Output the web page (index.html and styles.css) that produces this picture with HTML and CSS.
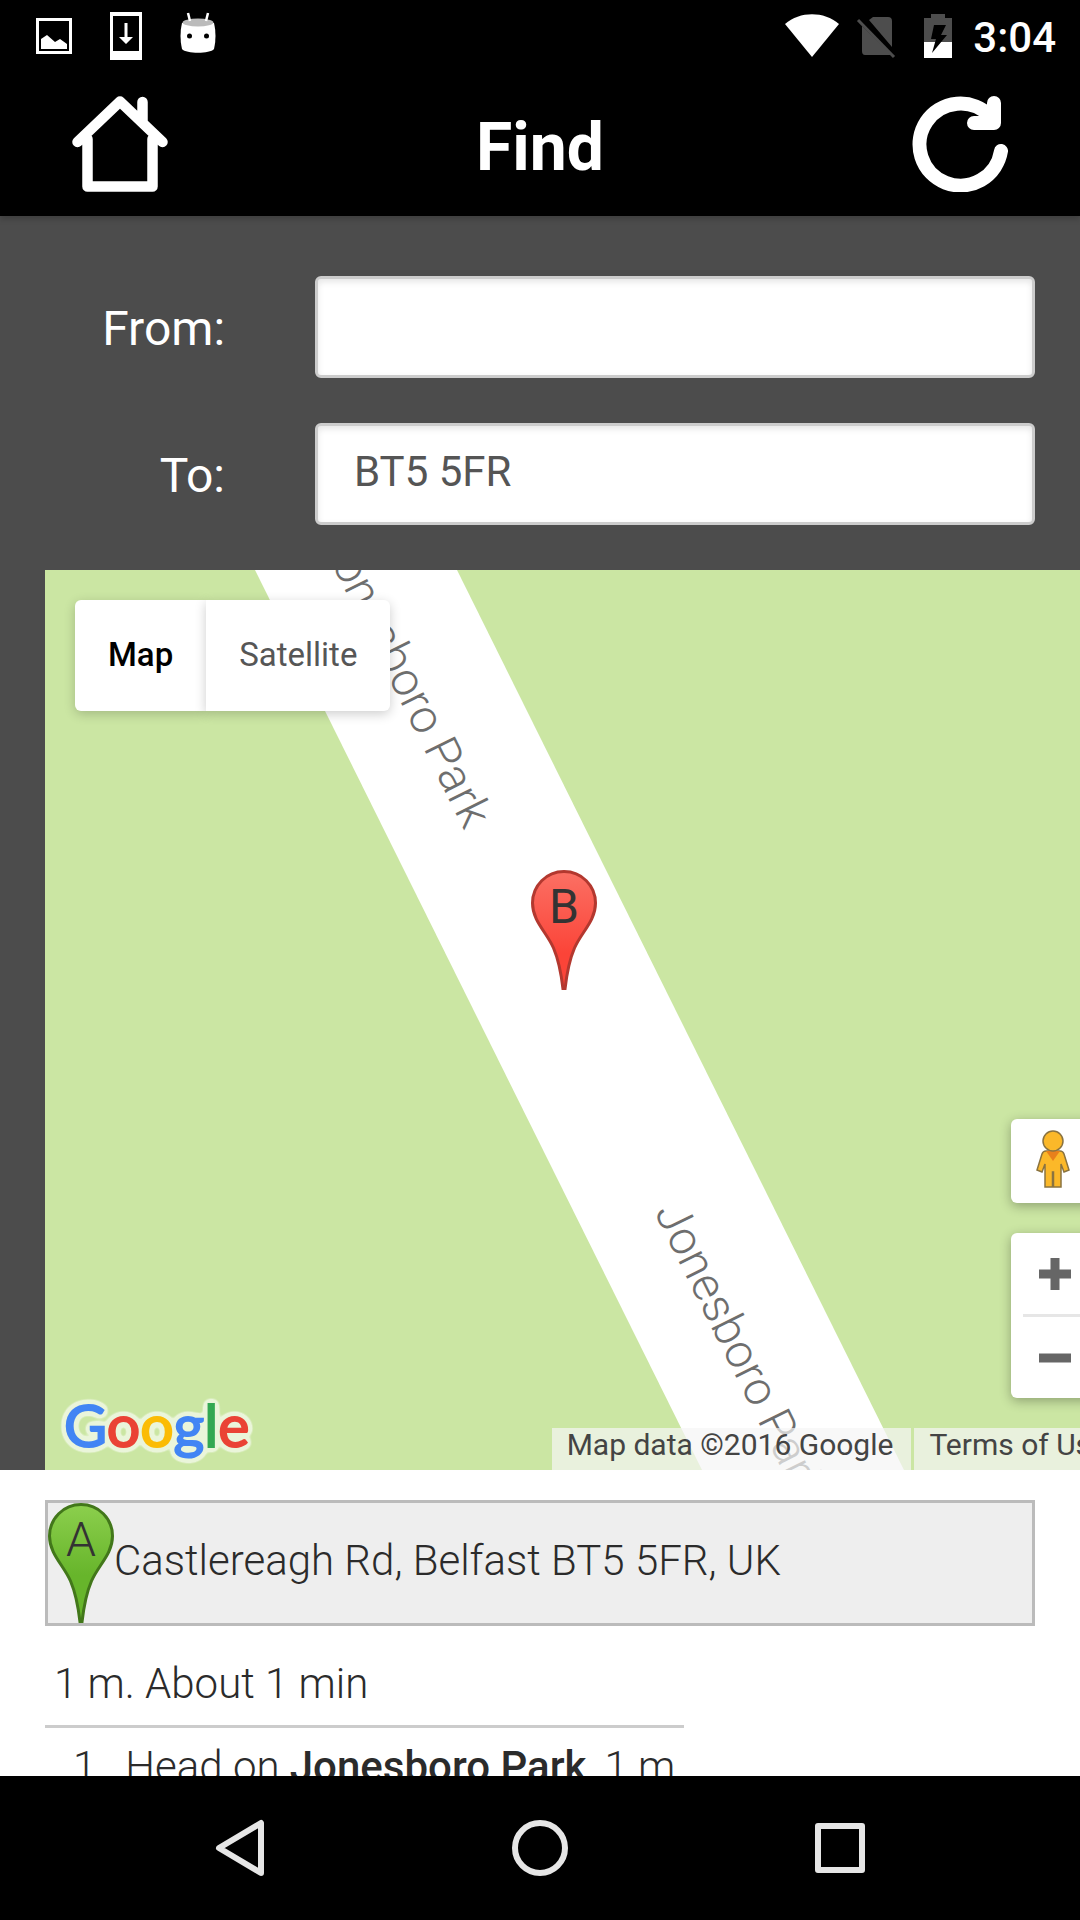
FILE: index.html
```html
<!DOCTYPE html>
<html lang="en">
<head>
  <meta charset="UTF-8">
  <title>Find</title>
  <meta name="viewport" content="width=device-width, initial-scale=1.0">
  <link rel="stylesheet" href="styles.css">
</head>
<body>

  <div class="status-bar">
    <div class="notifications">
      <svg width="72" height="72" viewBox="0 0 72 72">
        <rect x="19.5" y="19.5" width="33" height="33" fill="none" stroke="#fff" stroke-width="3"/>
        <path d="M23 39l6-4 8 7 5-3 7 5v5H23z" fill="#fff"/>
      </svg>
      <svg width="72" height="72" viewBox="0 0 72 72">
        <path d="M20 12h32v48H20zM23 16v35h26V16z" fill="#fff" fill-rule="evenodd"/>
        <path d="M34.500 23h3v14h5.500L36 44l-7-7h5.500z" fill="#fff"/>
      </svg>
      <svg width="72" height="72" viewBox="0 0 72 72">
        <path d="M20 23c-2 8-2 18 0 26 4 5 28 5 32 0 2-8 2-18 0-26z" fill="#fff"/>
        <ellipse cx="36" cy="22.500" rx="15.500" ry="4" fill="#bbb"/>
        <path d="M26 13l2 8M46 13l-2 8" stroke="#fff" stroke-width="2.500"/>
        <circle cx="27.500" cy="36" r="2.500"/>
        <circle cx="44.500" cy="36" r="2.500"/>
      </svg>
    </div>
    <div class="system-icons">
      <svg width="54" height="72" viewBox="0 0 54 72">
        <path d="M0 24C15 11 39 11 54 24L27 57z" fill="#fff"/>
      </svg>
      <svg width="40" height="72" viewBox="0 0 40 72">
        <path d="M13 20l4-3h15q4 0 4 4v26zM6 26l29 29H9q-3 0-3-4z" fill="#4d4d4d"/>
        <path d="M2 20l36 37" stroke="#4d4d4d" stroke-width="3"/>
      </svg>
      <svg width="30" height="72" viewBox="0 0 30 72">
        <path d="M1 18h7v-4h14v4h7v24H1z" fill="#4d4d4d"/>
        <path d="M1 42h28v16H1z" fill="#fff"/>
        <path d="M11 25h12l-5 10h6L9 53l4-14H8z"/>
      </svg>
      <span class="clock">3:04</span>
    </div>
  </div>

  <header class="header">
    <button class="icon-btn" aria-label="Home">
      <svg width="96" height="96" viewBox="0 0 96 96" fill="none" stroke="#fff" stroke-width="10.500" stroke-linecap="round" stroke-linejoin="round">
        <path d="M5.500 46L48 5.500 90.500 46M70.500 6v20M15.500 43v47.500h65V43"/>
      </svg>
    </button>
    <h1>Find</h1>
    <button class="icon-btn" aria-label="Refresh">
      <svg width="96" height="96" viewBox="0 0 96 96" fill="none" stroke="#fff" stroke-width="14" stroke-linecap="round" stroke-linejoin="round">
        <path d="M89 55A41 41 0 1 1 78 20"/>
        <path d="M82 7v20H62" />
        <path d="M72 16l10 10" stroke-width="12"/>
      </svg>
    </button>
  </header>

  <main>
    <form class="route-form">
      <label for="from">From:</label>
      <input type="text" id="from">
      <label for="to">To:</label>
      <input type="text" id="to" value="BT5 5FR">
    </form>

    <div class="map">
      <div class="map-canvas">
        <svg class="roads" width="100%" height="900">
          <path d="M210 0H412L859 900H657z" fill="#fff"/>
          <text transform="translate(275 -30) rotate(63.600)">Jonesboro Park</text>
          <text transform="translate(609 642) rotate(63.600)">Jonesboro Park</text>
        </svg>

        <svg class="pin pin-b" width="66" height="120" viewBox="0 0 66 120">
          <defs>
            <linearGradient id="red" x1="0" y1="0" x2="0" y2="1">
              <stop offset="0" stop-color="#fb7064"/>
              <stop offset="0.700" stop-color="#fb4438"/>
            </linearGradient>
          </defs>
          <path d="M33 1.500C15.500 1.500 1.500 15.500 1.500 33c0 18 14 29 21 45 6 14 8 28 9.500 41h2c1.500-13 3.500-27 9.500-41 7-16 21-27 21-45C64.500 15.500 50.500 1.500 33 1.500z" fill="url(#red)" stroke="#b3382f" stroke-width="3"/>
          <text x="33" y="53">B</text>
        </svg>

        <div class="map-type">
          <button class="active">Map</button>
          <button>Satellite</button>
        </div>

        <div class="map-controls">
          <button class="pegman" aria-label="Street View">
            <svg width="36" height="60" viewBox="0 0 36 60" fill="#fbb829" stroke="#8a7340" stroke-width="1.500">
              <path d="M11 21h14q3 0 4 3l5 16-5 2-3-8v23h-7.500V42h-1v15H10V34l-3 8-5-2 5-16q1-3 4-3z"/>
              <path d="M11 21h14l-7 10z" fill="#e8801c" stroke="none"/>
              <circle cx="18" cy="11" r="10"/>
            </svg>
          </button>
          <div class="zoom">
            <button aria-label="Zoom in">
              <svg width="32" height="32" viewBox="0 0 32 32"><path d="M11.500 0h9v11.500H32v9H20.500V32h-9V20.500H0v-9h11.500z" fill="#666"/></svg>
            </button>
            <button aria-label="Zoom out">
              <svg width="32" height="32" viewBox="0 0 32 32"><path d="M0 11.500h32v9H0z" fill="#666"/></svg>
            </button>
          </div>
        </div>

        <a class="google-logo" href="#" aria-label="Google">
          <svg width="204" height="78" viewBox="0 0 204 78">
            <defs>
              <!-- pale outline around the letters -->
              <filter id="halo" x="-10%" y="-20%" width="120%" height="140%" color-interpolation-filters="sRGB">
                <feGaussianBlur in="SourceAlpha" stdDeviation="3"/>
                <feComponentTransfer result="edge">
                  <feFuncA type="linear" slope="14" intercept="-0.400"/>
                </feComponentTransfer>
                <feFlood flood-color="#eaf5da"/>
                <feComposite in2="edge" operator="in" result="glow"/>
                <feMerge>
                  <feMergeNode in="glow"/>
                  <feMergeNode in="SourceGraphic"/>
                </feMerge>
              </filter>
            </defs>
            <text x="7" y="55" filter="url(#halo)"><tspan class="blue">G</tspan><tspan class="red">o</tspan><tspan class="yellow">o</tspan><tspan class="blue">g</tspan><tspan class="green">l</tspan><tspan class="red">e</tspan></text>
          </svg>
        </a>

        <div class="map-legal">
          <span>Map data ©2016 Google</span>
          <a href="#">Terms of Use</a>
        </div>
      </div>
    </div>

    <section class="directions">
      <div class="place">
        <svg class="pin" width="66" height="120" viewBox="0 0 66 120">
          <defs>
            <linearGradient id="green" x1="0" y1="0" x2="0" y2="1">
              <stop offset="0" stop-color="#8ccf4d"/>
              <stop offset="0.600" stop-color="#67b52b"/>
            </linearGradient>
          </defs>
          <path d="M33 1.500C15.500 1.500 1.500 15.500 1.500 33c0 18 14 29 21 45 6 14 8 28 9.500 41h2c1.500-13 3.500-27 9.500-41 7-16 21-27 21-45C64.500 15.500 50.500 1.500 33 1.500z" fill="url(#green)" stroke="#42771a" stroke-width="3"/>
          <text x="33" y="53">A</text>
        </svg>
        <span>Castlereagh Rd, Belfast BT5 5FR, UK</span>
      </div>

      <p class="summary">1 m. About 1 min</p>

      <table class="steps">
        <tr>
          <td class="num">1.</td>
          <td>Head on <b>Jonesboro Park</b></td>
          <td class="distance">1 m</td>
        </tr>
      </table>
    </section>
  </main>

  <nav class="nav-bar">
    <button aria-label="Back">
      <svg width="60" height="60" viewBox="0 0 60 60"><path d="M51 5v50L9 30z"/></svg>
    </button>
    <button aria-label="Home screen">
      <svg width="60" height="60" viewBox="0 0 60 60"><circle cx="30" cy="30" r="25"/></svg>
    </button>
    <button aria-label="Recent apps">
      <svg width="60" height="60" viewBox="0 0 60 60"><rect x="8" y="8" width="44" height="44"/></svg>
    </button>
  </nav>

</body>
</html>
```

FILE: styles.css
```css
* {
  box-sizing: border-box;
}

body {
  font-family: Roboto, sans-serif;
  background: #000;
  margin: 0;
  height: 100vh;
  display: flex;
  flex-direction: column;
  overflow: hidden;
}

button {
  font-family: inherit;
  border: none;
  margin: 0;
  padding: 0;
  cursor: pointer;
}

svg {
  display: block;
}

/* status bar */
.status-bar {
  display: flex;
  justify-content: space-between;
  flex-shrink: 0;
  height: 72px;
  padding: 0 24px 0 18px;
  color: #fff;
}

.notifications {
  display: flex;
}

.system-icons {
  display: flex;
  align-items: center;
}

.system-icons svg {
  margin-right: 17px;
}

.system-icons svg:nth-of-type(2) {
  margin-right: 27px;
}

.system-icons svg:nth-of-type(3) {
  margin-right: 20px;
}

.clock {
  font-size: 42px;
  font-weight: 500;
  line-height: 72px;
  padding-top: 3px;
}

/* header */
.header {
  display: flex;
  justify-content: space-between;
  align-items: center;
  flex-shrink: 0;
  height: 144px;
  padding: 0 72px;
  background: #000;
  color: #fff;
  position: relative;
  z-index: 1;
  box-shadow: 0 3px 6px rgba(0, 0, 0, 0.2);
}

.header h1 {
  margin: 6px 0 0;
  font-size: 66px;
  font-weight: bold;
}

.icon-btn {
  background: none;
}

main {
  flex: 1;
  min-height: 0;
  overflow: hidden;
  background: #4c4c4c;
}

/* from / to */
.route-form {
  display: grid;
  grid-template-columns: 180px 1fr;
  gap: 45px 90px;
  align-items: center;
  padding: 60px 45px 45px;
}

.route-form label {
  padding-top: 3px;
  color: #fff;
  font-size: 48px;
  text-align: right;
}

.route-form input {
  width: 100%;
  height: 102px;
  padding: 0 36px 6px;
  border: 3px solid #ccc;
  border-radius: 6px;
  background: #fff;
  box-shadow: inset 0 3px 6px rgba(0, 0, 0, 0.1);
  color: #555;
  font-family: inherit;
  font-size: 42px;
}

/* map */
.map {
  margin-left: 45px;
  height: 900px;
  overflow: hidden;
  background: #cbe6a3;
}

.map-canvas {
  position: relative;
  width: calc(100% + 45px);
  height: 100%;
}

.roads text {
  font-size: 47px;
  font-weight: 300;
  fill: #6e6e6e;
}

.pin text {
  font-size: 48px;
  fill: #333;
  text-anchor: middle;
}

.pin-b {
  position: absolute;
  left: 486px;
  top: 300px;
}

.map-type {
  position: absolute;
  left: 30px;
  top: 30px;
  display: flex;
}

.map-type button {
  height: 111px;
  padding: 0 33px 3px;
  background: #fff;
  color: #565656;
  font-size: 33px;
  border-radius: 0 6px 6px 0;
  box-shadow: 0 3px 12px rgba(0, 0, 0, 0.2);
}

.map-type .active {
  color: #000;
  font-weight: 500;
  border-radius: 6px 0 0 6px;
}

.map-controls {
  position: absolute;
  right: 30px;
  bottom: 72px;
  display: flex;
  flex-direction: column;
  gap: 30px;
  width: 84px;
}

.map-controls button {
  display: flex;
  align-items: center;
  justify-content: center;
  width: 100%;
  height: 81px;
  padding-left: 3px;
  background: none;
}

.map-controls .pegman,
.zoom {
  background: #fff;
  border-radius: 6px;
  box-shadow: 0 3px 12px rgba(0, 0, 0, 0.3);
}

.map-controls .pegman {
  height: 84px;
  padding: 0 0 3px;
}

.zoom button + button::before {
  content: "";
  position: absolute;
  left: 12px;
  right: 12px;
  top: 0;
  height: 3px;
  background: #e6e6e6;
}

.zoom button + button {
  position: relative;
  height: 84px;
  padding-top: 3px;
}

.google-logo {
  position: absolute;
  left: 12px;
  bottom: 0;
}

.google-logo text {
  font-family: Lato, sans-serif;
  font-size: 59px;
  stroke-width: 2px;
}

.google-logo .blue {
  fill: #4285f4;
  stroke: #4285f4;
}

.google-logo .red {
  fill: #ea4335;
  stroke: #ea4335;
}

.google-logo .yellow {
  fill: #fbbc05;
  stroke: #fbbc05;
}

.google-logo .green {
  fill: #34a853;
  stroke: #34a853;
}

.map-legal {
  position: absolute;
  right: 0;
  bottom: 0;
  display: flex;
  gap: 3px;
}

.map-legal span,
.map-legal a {
  padding: 0 18px 0 15px;
  background: rgba(245, 245, 245, 0.7);
  color: #444;
  font-size: 30px;
  line-height: 34px;
  height: 42px;
  text-decoration: none;
  white-space: nowrap;
}

/* directions */
.directions {
  min-height: 100%;
  padding: 30px 45px;
  background: #fff;
  color: #2b2b2b;
  font-size: 42px;
  font-weight: 300;
}

.place {
  display: flex;
  align-items: center;
  border: 3px solid #bbb;
  background: #eee;
}

.place span {
  padding-bottom: 6px;
}

.summary {
  margin: 0;
  padding: 29px 9px 13px;
  line-height: 57px;
}

.steps {
  border-collapse: collapse;
  border-top: 3px solid #ccc;
}

.steps td {
  padding: 12px 9px;
  line-height: 54px;
  white-space: nowrap;
}

.steps b {
  font-weight: 500;
}

.steps .num {
  padding: 12px 10px 12px 28px;
}

/* system nav */
.nav-bar {
  display: flex;
  justify-content: center;
  align-items: center;
  flex-shrink: 0;
  height: 144px;
  background: #000;
}

.nav-bar button {
  display: flex;
  justify-content: center;
  width: 300px;
  background: none;
}

.nav-bar svg {
  fill: none;
  stroke: #e6e6e6;
  stroke-width: 6px;
  stroke-linejoin: round;
}
```
